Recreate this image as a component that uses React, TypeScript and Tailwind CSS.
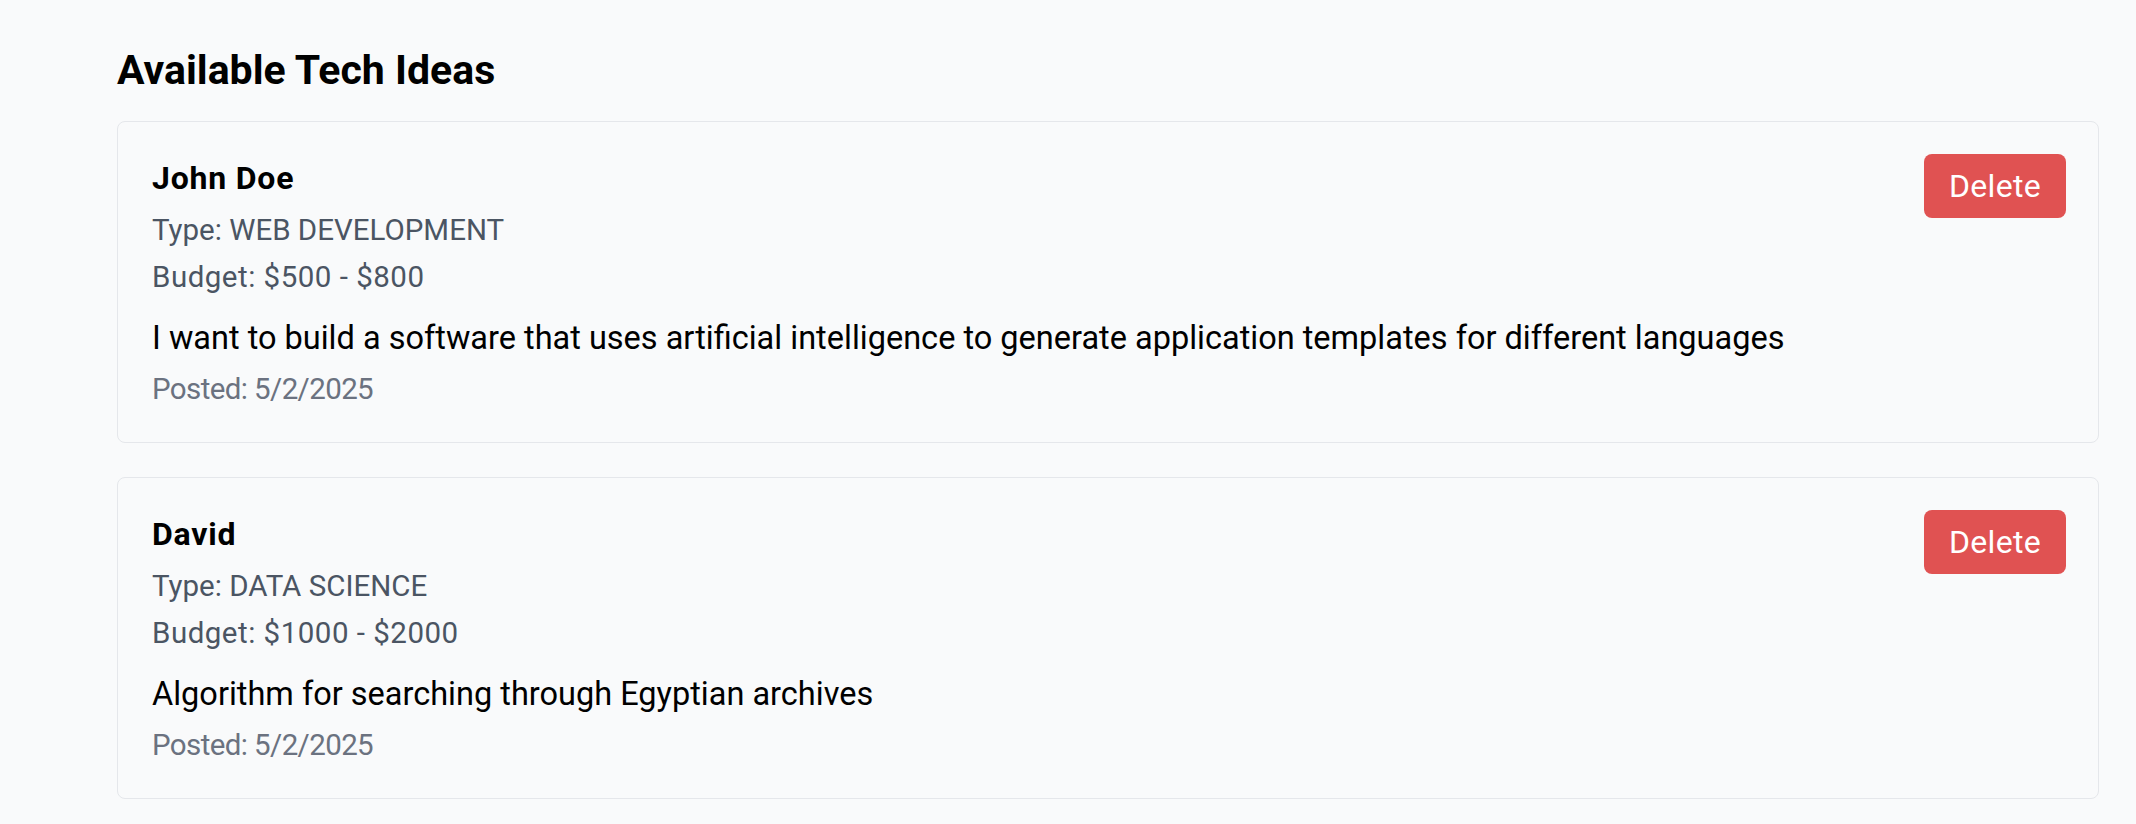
import React from "react";

type Idea = {
  name: string;
  type: string;
  budget: string;
  description: string;
  posted: string;
};

const ideas: Idea[] = [
  {
    name: "John Doe",
    type: "WEB DEVELOPMENT",
    budget: "$500 - $800",
    description:
      "I want to build a software that uses artificial intelligence to generate application templates for different languages",
    posted: "5/2/2025",
  },
  {
    name: "David",
    type: "DATA SCIENCE",
    budget: "$1000 - $2000",
    description: "Algorithm for searching through Egyptian archives",
    posted: "5/2/2025",
  },
];

function IdeaCard({ idea }: { idea: Idea }) {
  return (
    <div className="flex items-start justify-between rounded-lg border border-[#e5e7eb] bg-[#f9fafb] pl-[34px] pr-[32px] pt-[32px] pb-[33px]">
      <div className="flex flex-col">
        <div className="text-[32px] font-bold leading-[48px] tracking-[0.8px] text-black">{idea.name}</div>
        <div className="mt-[8px] text-[29.5px] leading-[40px] text-[#4b5563]">Type: {idea.type}</div>
        <div className="mt-[7px] text-[29.5px] leading-[40px] tracking-[0.5px] text-[#4b5563]">Budget: {idea.budget}</div>
        <div className="mt-[17px] text-[32.5px] leading-[48px] text-black">{idea.description}</div>
        <div className="mt-[7px] text-[29.5px] leading-[40px] tracking-[-0.6px] text-[#6b7280]">Posted: {idea.posted}</div>
      </div>
      <button className="flex h-[64px] items-center rounded-lg bg-[#e05252] px-[25px] text-[32px] leading-none tracking-[0.3px] text-white">
        Delete
      </button>
    </div>
  );
}

export default function App() {
  return (
    <div
      className="min-h-screen bg-[#f9fafb] pl-[117px] pr-[37px] pt-[46px]"
      style={{ fontFamily: "Roboto, 'Noto Sans', sans-serif" }}
    >
      <h1 className="text-[41px] font-bold leading-[49px] text-black">Available Tech Ideas</h1>
      <div className="mt-[26px] flex flex-col gap-[34px]">
        {ideas.map((idea) => (
          <IdeaCard key={idea.name} idea={idea} />
        ))}
      </div>
    </div>
  );
}
